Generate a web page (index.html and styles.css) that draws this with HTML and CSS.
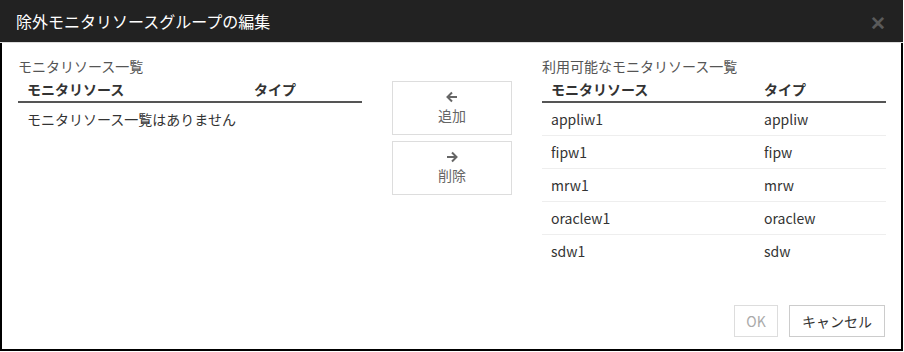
FILE: index.html
```html
<!DOCTYPE html>
<html lang="ja">
<head>
    <meta charset="UTF-8">
    <title>除外モニタリソースグループの編集</title>
    <link rel="stylesheet" href="styles.css">
</head>
<body>

    <div class="dialog">
        <div class="dialog-header">
            <h2>除外モニタリソースグループの編集</h2>
            <span class="close-btn">&#x2715;</span>
        </div>

        <div class="dialog-body">
            <div class="panel">
                <div class="panel-title">モニタリソース一覧</div>
                <table class="res-table left">
                    <thead>
                        <tr><th>モニタリソース</th><th>タイプ</th></tr>
                    </thead>
                    <tbody>
                        <tr class="empty"><td colspan="2">モニタリソース一覧はありません</td></tr>
                    </tbody>
                </table>
            </div>

            <div class="move-buttons">
                <button class="move-btn">
                    <svg width="12" height="12" viewBox="0 0 12 12"><path d="M11 6H2M6 1.5L1.5 6L6 10.5" fill="none" stroke="#666" stroke-width="2"/></svg>
                    <span>追加</span>
                </button>
                <button class="move-btn">
                    <svg width="12" height="12" viewBox="0 0 12 12"><path d="M1 6H10M6 1.5L10.5 6L6 10.5" fill="none" stroke="#666" stroke-width="2"/></svg>
                    <span>削除</span>
                </button>
            </div>

            <div class="panel">
                <div class="panel-title">利用可能なモニタリソース一覧</div>
                <table class="res-table right">
                    <thead>
                        <tr><th>モニタリソース</th><th>タイプ</th></tr>
                    </thead>
                    <tbody>
                        <tr><td>appliw1</td><td>appliw</td></tr>
                        <tr><td>fipw1</td><td>fipw</td></tr>
                        <tr><td>mrw1</td><td>mrw</td></tr>
                        <tr><td>oraclew1</td><td>oraclew</td></tr>
                        <tr><td>sdw1</td><td>sdw</td></tr>
                    </tbody>
                </table>
            </div>
        </div>

        <div class="dialog-footer">
            <button class="footer-btn ok-btn" disabled>OK</button>
            <button class="footer-btn">キャンセル</button>
        </div>
    </div>

</body>
</html>
```

FILE: styles.css
```css
body {
    margin: 0;
    font-family: "Noto Sans CJK JP", "Noto Sans", sans-serif;
    background-color: #fff;
    color: #333;
}

.dialog {
    width: 903px;
    height: 351px;
    box-sizing: border-box;
    border-left: 2px solid #000;
    border-right: 2px solid #000;
    border-bottom: 2px solid #000;
    display: flex;
    flex-direction: column;
}

.dialog-header {
    height: 42px;
    background-color: #222;
    border-bottom: 1px solid #ddd;
    display: flex;
    align-items: center;
    justify-content: space-between;
    padding: 0 17px 0 16px;
    margin-left: -2px;
    margin-right: -2px;
}

.dialog-header h2 {
    margin: 0;
    font-size: 16px;
    font-weight: normal;
    color: #fff;
}

.close-btn {
    color: #5a5a5a;
    font-size: 19px;
    font-weight: bold;
}

.dialog-body {
    display: flex;
    padding: 13px 0 0 16px;
}

.panel {
    width: 344px;
}

.panel-title {
    font-size: 14px;
    line-height: 21px;
    color: #555;
}

.res-table {
    width: 100%;
    border-collapse: collapse;
    font-size: 14px;
}

.res-table th {
    text-align: left;
    font-weight: bold;
    height: 24px;
    padding: 0 0 0 9px;
    border-bottom: 2px solid #555;
    color: #333;
}

.res-table td {
    height: 32px;
    padding: 0 0 0 9px;
    border-bottom: 1px solid #eee;
}

.res-table tbody tr:last-child td {
    border-bottom: none;
}

.res-table.left th:first-child {
    width: 218px;
}

.res-table.right th:first-child {
    width: 204px;
}

.move-buttons {
    display: flex;
    flex-direction: column;
    gap: 6px;
    margin: 25px 30px 0;
}

.move-btn {
    width: 120px;
    height: 54px;
    background-color: #fff;
    border: 1px solid #ddd;
    display: flex;
    flex-direction: column;
    align-items: center;
    justify-content: center;
    gap: 2px;
    font-family: inherit;
    font-size: 14px;
    color: #666;
    padding: 0;
}

.dialog-footer {
    margin-top: auto;
    display: flex;
    justify-content: flex-end;
    gap: 11px;
    padding: 0 16px 12px 0;
}

.footer-btn {
    height: 32px;
    padding: 0 12px;
    background-color: #fff;
    border: 1px solid #ccc;
    font-family: inherit;
    font-size: 14px;
    color: #333;
}

.ok-btn {
    width: 44px;
    padding: 0;
    color: #aaa;
    border-color: #ddd;
}
```
